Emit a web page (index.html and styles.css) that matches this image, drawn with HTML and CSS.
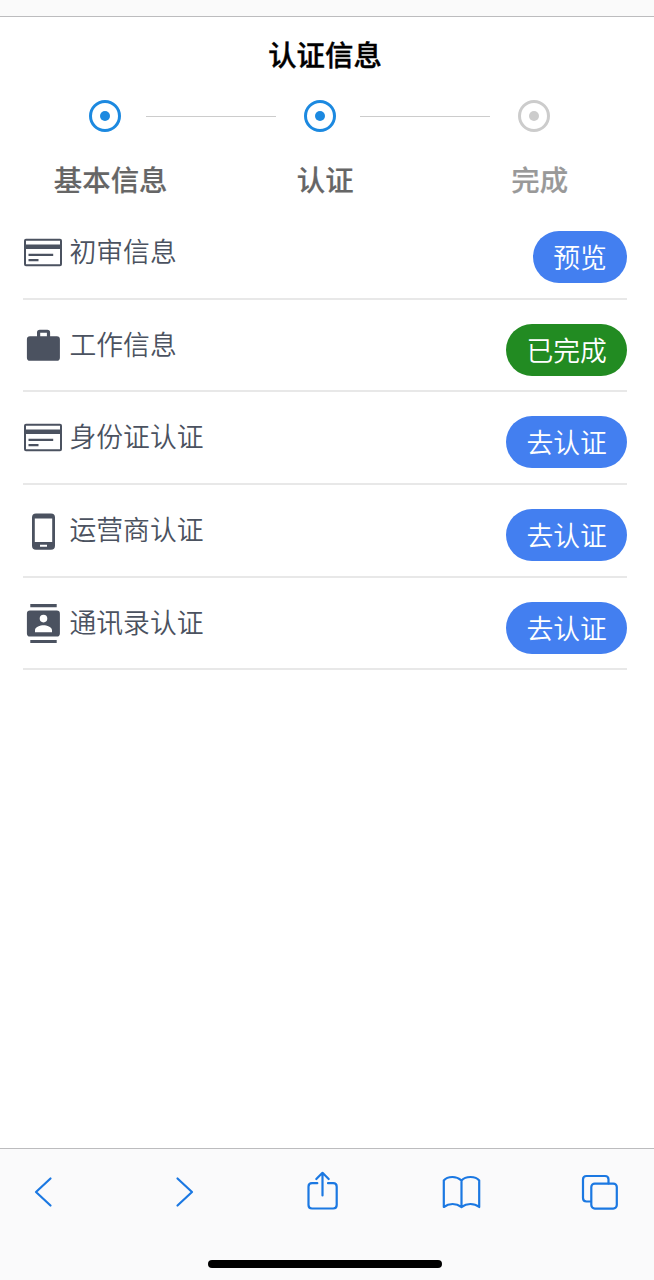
FILE: index.html
```html
<!DOCTYPE html>
<html lang="zh-CN">

	<head>
		<meta charset="UTF-8">
		<title>认证信息</title>
		<link rel="stylesheet" href="styles.css">
	</head>

	<body>
		<div class="topBar"></div>
		<div class="main">
			<h1 class="title">认证信息</h1>
			<div class="stepMarks">
				<i class="mark"></i>
				<span class="line"></span>
				<i class="mark"></i>
				<span class="line"></span>
				<i class="mark wait"></i>
			</div>
			<div class="stepNames">
				<span>基本信息</span>
				<span>认证</span>
				<span class="wait">完成</span>
			</div>
			<ul class="list">
				<li class="item">
					<svg class="icon" viewBox="0 0 40 40"><rect x="2" y="6.8" width="36" height="25.4" rx="1" fill="none" stroke="currentColor" stroke-width="2"/><path fill="currentColor" d="M1 11.5h38v4.5H1zM5.5 20.7h24.7v2.2H5.5zM5.5 26h10v2.2h-10z"/></svg>
					<span class="name">初审信息</span>
					<a class="btn">预览</a>
				</li>
				<li class="item">
					<svg class="icon" viewBox="0 0 40 40"><path fill="currentColor" fill-rule="evenodd" d="M14 10.2V6.5q0-2.8 2.8-2.8h7.5q2.8 0 2.8 2.8v3.7h6.7q3.1 0 3.1 3.1v18.4q0 3.1-3.1 3.1H7q-3.1 0-3.1-3.1V13.3q0-3.1 3.1-3.1zm3.2 0h6.7V6.8h-6.7z"/></svg>
					<span class="name">工作信息</span>
					<a class="btn done">已完成</a>
				</li>
				<li class="item">
					<svg class="icon" viewBox="0 0 40 40"><rect x="2" y="6.8" width="36" height="25.4" rx="1" fill="none" stroke="currentColor" stroke-width="2"/><path fill="currentColor" d="M1 11.5h38v4.5H1zM5.5 20.7h24.7v2.2H5.5zM5.5 26h10v2.2h-10z"/></svg>
					<span class="name">身份证认证</span>
					<a class="btn">去认证</a>
				</li>
				<li class="item">
					<svg class="icon" viewBox="0 0 40 40"><path fill="currentColor" fill-rule="evenodd" d="M13 2.5h15q4 0 4 4v28.3q0 4-4 4H13q-4 0-4-4V6.500q0-4 4-4zm-1.200 5v23.500h17.400V7.500zM17 33.800v2h7v-2z"/></svg>
					<span class="name">运营商认证</span>
					<a class="btn">去认证</a>
				</li>
				<li class="item">
					<svg class="icon" viewBox="0 0 40 40"><path fill="currentColor" fill-rule="evenodd" d="M7.3 0h26.4v3.2H7.3zM7.3 35.9h26.4v3.2H7.3zM7 6.6h26.8q3.1 0 3.1 3.1v19.7q0 3.1-3.1 3.1H7q-3.1 0-3.1-3.1V9.7q0-3.1 3.1-3.1zm13.5 4.200a3.800 3.800 0 1 0 0 7.600a3.800 3.800 0 1 0 0-7.600zM12 28.200h17v-2c0-3.200-5.300-4.900-8.500-4.900s-8.500 1.700-8.500 4.900z"/></svg>
					<span class="name">通讯录认证</span>
					<a class="btn">去认证</a>
				</li>
			</ul>
		</div>
		<div class="toolBar">
			<div class="tools">
				<svg class="tool" viewBox="0 0 40 40"><path d="M27.500 6.500 13 20 27.500 33.500"/></svg>
				<svg class="tool" viewBox="0 0 40 40"><path d="M15.500 6.500 30 20 15.500 33.500"/></svg>
				<svg class="tool" viewBox="0 0 40 40"><path d="M15.300 11.200H10Q6.500 11.200 6.500 14.700v18.300q0 3.500 3.500 3.500h21.200q3.500 0 3.500-3.500v-18.300q0-3.500-3.500-3.500H26M20.500 23.500V1M14.300 7 20.500 .8 26.700 7"/></svg>
				<svg class="tool" viewBox="0 0 40 40"><path d="M20.500 8.500Q16.500 5 11.500 5 5.500 5 2.800 8.500V35q4-3 8.800-3t8.900 3q4-3 8.900-3t8.800 3V8.500Q35.500 5 29.500 5t-9 3.500V35"/></svg>
				<svg class="tool" viewBox="0 0 40 40"><path d="M10.500 29.500H6.500Q3 29.500 3 26V7.500Q3 4 6.500 4h18.500q3.500 0 3.500 3.500v4"/><rect x="11.300" y="11.600" width="25.500" height="25" rx="3.500"/></svg>
			</div>
			<div class="homeLine"></div>
		</div>
	</body>

</html>
```

FILE: styles.css
```css
body {
	display: flex;
	flex-direction: column;
	height: 1280px;
	margin: 0;
	background: #fff;
	font-family: "Noto Sans CJK SC", sans-serif;
}

.topBar {
	height: 16px;
	background: #fafafa;
	border-bottom: 1px solid #bcbcbe;
}

.main {
	flex: 1;
}

.title {
	margin: 16px 0 0;
	padding-right: 4px;
	font-size: 28.4px;
	line-height: 42px;
	font-weight: 500;
	text-align: center;
	color: #000;
	-webkit-text-stroke: .4px;
}

.stepMarks {
	display: flex;
	align-items: center;
	margin-top: 25px;
	padding-left: 89px;
}

.mark {
	display: flex;
	align-items: center;
	justify-content: center;
	box-sizing: border-box;
	width: 32px;
	height: 32px;
	border: 3px solid #1c89e0;
	border-radius: 50%;
	color: #1c89e0;
}

.mark::after {
	content: "";
	width: 10px;
	height: 10px;
	border-radius: 50%;
	background: currentColor;
}

.mark.wait {
	border-color: #ccc;
	color: #ccc;
}

.line {
	width: 130px;
	height: 1px;
	margin: 1px 28px 0 25px;
	background: #ccc;
}

.line ~ .line {
	margin-left: 24px;
}

.stepNames {
	display: flex;
	margin-top: 26px;
	padding-left: 3.4px;
	font-size: 28.4px;
	line-height: 42px;
	font-weight: 500;
	color: #666;
	-webkit-text-stroke: .2px;
}

.stepNames span {
	width: 214.5px;
	text-align: center;
}

.stepNames .wait {
	color: #999;
}

.list {
	margin: 7.2px 27px 0 23px;
	padding: 0;
	list-style: none;
}

.item {
	display: flex;
	align-items: flex-start;
	box-sizing: border-box;
	height: 92.6px;
	border-bottom: 2px solid #e8e8e8;
	font-size: 26.8px;
	font-weight: 350;
	color: #4b5260;
}

.icon {
	width: 40px;
	height: 40px;
	margin-top: 26px;
}

.name {
	flex: 1;
	margin: 24px 0 0 6.5px;
	line-height: 40px;
}

.btn {
	padding: 0 20.2px;
	margin-top: 24px;
	border-radius: 26px;
	background: #437ff0;
	line-height: 52px;
	color: #fff;
}

.btn.done {
	background: #228b22;
}

.toolBar {
	height: 131px;
	background: #fafafb;
	border-top: 1px solid #bcbcbe;
}

.tools {
	display: flex;
	justify-content: space-between;
	padding: 23px 34px 0 23px;
}

.tool {
	width: 40px;
	height: 40px;
	fill: none;
	stroke: #1b78e2;
	stroke-width: 2.2;
	stroke-linecap: round;
	stroke-linejoin: round;
	overflow: visible;
}

.homeLine {
	width: 234px;
	height: 8px;
	margin: 48px 0 0 208px;
	border-radius: 4px;
	background: #000;
}
```
